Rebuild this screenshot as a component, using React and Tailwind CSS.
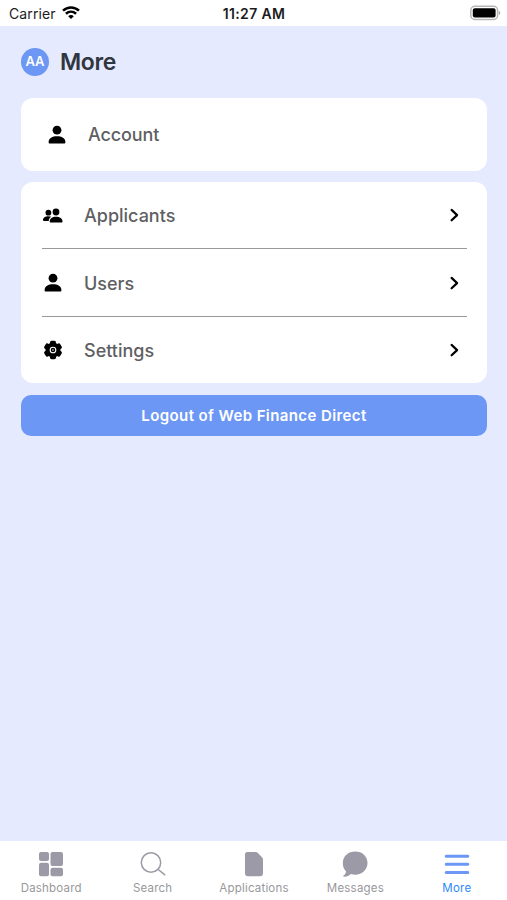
import React from 'react';

function PersonIcon() {
  return (
    <svg width="18" height="20" viewBox="0 0 18 20" fill="#000">
      <circle cx="9" cy="5.2" r="4.4" />
      <path d="M.6 17.2C.6 13 4.4 11.2 9 11.2s8.400 1.800 8.400 6c0 1-.5 1.400-1.400 1.400H2c-.9 0-1.400-.4-1.400-1.400Z" />
    </svg>
  );
}

function PeopleIcon() {
  return (
    <svg className="mt-px" width="20" height="16" viewBox="0 0 20 16" fill="#000">
      <circle cx="5.400" cy="4.700" r="2.900" />
      <path d="M0 12.100c0-2.500 2.400-3.800 5.400-3.800 1.200 0 2.100.2 2.800.5-1.500 1.100-2.400 2.400-2.500 4.200H1c-.7 0-1-.3-1-.9Z" />
      <circle cx="13" cy="4" r="3.400" />
      <path d="M6.700 13.600c0-3 2.600-4.800 6.300-4.800s6.500 1.800 6.500 4.800c0 .7-.4 1-1 1H7.700c-.6 0-1-.3-1-1Z" />
    </svg>
  );
}

function GearIcon() {
  return (
    <svg width="20" height="20" viewBox="0 0 20 20">
      <circle cx="10" cy="10" r="7.500" />
      <g>
        <rect x="7" y=".8" width="6" height="18.400" rx="1.600" />
        <rect x="7" y=".8" width="6" height="18.400" rx="1.600" transform="rotate(60 10 10)" />
        <rect x="7" y=".8" width="6" height="18.400" rx="1.600" transform="rotate(120 10 10)" />
      </g>
      <circle cx="10" cy="10" r="2.800" stroke="#fff" strokeWidth="1.100" />
      <circle cx="10" cy="10" r=".9" fill="#999" />
    </svg>
  );
}

function Row({ icon, label, className }) {
  return (
    <div className={`flex items-center ${className}`}>
      <span className="flex w-[22px] shrink-0 justify-center">{icon}</span>
      <span className="ml-5 flex-1 pt-[2px] text-[18px] leading-6 font-medium text-[#5f5f63]">{label}</span>
      <svg className="mr-2 shrink-0" width="9" height="14" viewBox="0 0 9 14" fill="none" stroke="#000" strokeWidth="2.200" strokeLinecap="round" strokeLinejoin="round">
        <path d="m1.600 1.900 5.500 5.200-5.500 5.200" />
      </svg>
    </div>
  );
}

function Tab({ icon, label, active }) {
  return (
    <div className="flex flex-1 flex-col items-center pt-[9px] pl-px">
      <span className="flex h-7 items-center">{icon}</span>
      <span className={`mt-[2px] text-[11.500px] leading-4 tracking-[0.2px] ${active ? 'text-[#2b8af7]' : 'text-[#98989c]'}`}>{label}</span>
    </div>
  );
}

export default function App() {
  return (
    <div className="flex h-[900px] w-[507px] flex-col overflow-hidden bg-[#e5eaff] font-['Inter','Liberation_Sans',sans-serif]">
      <header className="grid h-[26px] shrink-0 grid-cols-3 items-center bg-white pr-[6px] pl-[9px] text-[14px] leading-5 text-[#1c1c1e]">
        <div className="flex items-center gap-[6px]">
          <span className="pt-px tracking-[0.1px]">Carrier</span>
          <svg width="18" height="14" viewBox="0 0 18 14" fill="none" stroke="#000" strokeWidth="2.500">
            <path d="M1 4.700c4.600-4.300 11.400-4.300 16 0M3.900 7.800c3-2.700 7.200-2.700 10.200 0" />
            <path d="M6.200 10.200c1.600-1.500 4-1.500 5.600 0L9 13Z" fill="#000" stroke="none" />
          </svg>
        </div>
        <div className="pt-px pr-[2px] text-center font-semibold tracking-[0.35px]">11:27 AM</div>
        <svg className="justify-self-end" width="31" height="16" viewBox="0 0 31 16">
          <rect x=".8" y="1.300" width="26.800" height="13.200" rx="4" fill="#fff" stroke="#b6b6b6" strokeWidth="1.500" />
          <rect x="2.800" y="3.300" width="22.800" height="9.200" rx="2" />
          <path d="M28.800 5.700c2 .8 2 3.600 0 4.400Z" fill="#aaa" />
        </svg>
      </header>

      <main className="flex-1 pr-[20px] pl-[21px]">
        <div className="flex h-[72px] items-center">
          <span className="flex size-[28px] items-center justify-center rounded-full bg-[#6c97f4] text-[13px] font-semibold text-white">AA</span>
          <h1 className="ml-[11px] pt-px text-[23px] font-semibold tracking-[-0.4px] text-[#303640]">More</h1>
        </div>
        <section className="flex h-[73px] items-center rounded-[12px] bg-white pl-[27px]">
          <PersonIcon />
          <span className="ml-[22px] pt-px text-[18px] leading-6 font-medium tracking-[-0.1px] text-[#5f5f63]">Account</span>
        </section>
        <section className="mt-[11px] h-[201px] rounded-[12px] bg-white pr-5 pl-[21px]">
          <Row icon={<PeopleIcon />} label="Applicants" className="h-[67px] border-b border-[#999]" />
          <Row icon={<PersonIcon />} label="Users" className="h-[68px] border-b border-[#999]" />
          <Row icon={<GearIcon />} label="Settings" className="h-[66px]" />
        </section>
        <button className="mt-3 flex h-[41px] w-full items-center justify-center rounded-[10px] bg-[#6c97f4] pt-px text-[15px] font-semibold tracking-[0.4px] text-white">
          Logout of Web Finance Direct
        </button>
      </main>

      <nav className="flex h-[59px] shrink-0 bg-white">
        <Tab
          label="Dashboard"
          icon={
            <svg width="26" height="26" viewBox="0 0 26 26" fill="#9c9aa6">
              <rect x="1" y="1" width="10" height="9" rx="2" />
              <rect x="12.500" y="1" width="12.500" height="14" rx="2" />
              <rect x="1" y="11.700" width="10" height="13.500" rx="2" />
              <rect x="12.500" y="16.700" width="12.500" height="8.500" rx="2" />
            </svg>
          }
        />
        <Tab
          label="Search"
          icon={
            <svg width="26" height="26" viewBox="0 0 26 26" fill="none" stroke="#9c9aa6" strokeWidth="1.500" strokeLinecap="round">
              <circle cx="11" cy="11.500" r="9.700" />
              <path d="m18.200 18.500 6.400 5.200" />
            </svg>
          }
        />
        <Tab
          label="Applications"
          icon={
            <svg width="20" height="26" viewBox="0 0 20 26" fill="#9c9aa6">
              <path d="M3.500 1h8.200c.8 0 1.400.2 2 .8l4.500 4.700c.6.6.8 1.200.8 2v13.700c0 2-1 3-3 3H4c-2 0-3-1-3-3V3.500C1 1.900 1.900 1 3.500 1Z" />
            </svg>
          }
        />
        <Tab
          label="Messages"
          icon={
            <svg width="26" height="26" viewBox="0 0 26 26" fill="#9c9aa6">
              <path d="M13.300.6C6.300.6.800 5.300.800 12c0 3.800 1.300 6.500 3.300 8.500-.3 1.800-1.300 3.200-2.700 4.300-.4.400-.2.900.4.900 3 .1 5.400-1 7.200-2.600 1.400.4 2.800.6 4.300.6 6.800 0 12.200-5.100 12.200-11.700S20.300.6 13.300.6Z" />
            </svg>
          }
        />
        <Tab
          label="More"
          active
          icon={
            <svg width="26" height="26" viewBox="0 0 26 26" stroke="#6c97f4" strokeWidth="3" strokeLinecap="round">
              <path d="M2.200 5.200h21.600M2.200 13.300h21.600M2.200 21.600h21.600" />
            </svg>
          }
        />
      </nav>
    </div>
  );
}
